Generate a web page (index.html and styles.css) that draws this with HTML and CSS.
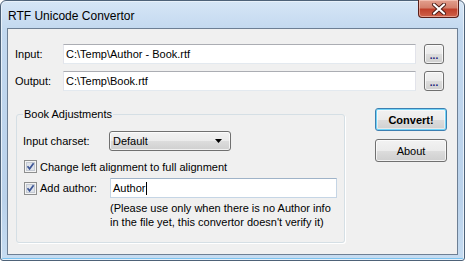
FILE: index.html
```html
<!DOCTYPE html>
<html lang="en">

<head>
    <meta charset="UTF-8">
    <title>RTF Unicode Convertor</title>
    <link rel="stylesheet" href="styles.css">
</head>

<body>
    <div class="window">
        <div class="titlebar">
            <span class="title">RTF Unicode Convertor</span>
            <div class="close">
                <svg width="16" height="12" viewBox="0 0 16 12">
                    <path d="M3 1.5 L13 10.5 M13 1.5 L3 10.5" stroke="#4a1a14" stroke-width="4" stroke-linecap="round" />
                    <path d="M3 1.5 L13 10.5 M13 1.5 L3 10.5" stroke="#fff" stroke-width="2.2" stroke-linecap="round" />
                </svg>
            </div>
        </div>
        <div class="client">
            <div class="file-row">
                <label class="file-label">Input:</label>
                <div class="textbox path">C:\Temp\Author - Book.rtf</div>
                <div class="btn browse">...</div>
            </div>
            <div class="file-row second">
                <label class="file-label">Output:</label>
                <div class="textbox path">C:\Temp\Book.rtf</div>
                <div class="btn browse">...</div>
            </div>
            <div class="lower">
                <fieldset class="group">
                    <legend>Book Adjustments</legend>
                    <div class="charset-row">
                        <span class="charset-label">Input charset:</span>
                        <div class="btn combo">
                            <span>Default</span>
                            <svg width="7" height="4" viewBox="0 0 7 4"><path d="M0 0 H7 L3.5 4 Z" fill="#000" /></svg>
                        </div>
                    </div>
                    <div class="check-row">
                        <svg class="check" width="13" height="13" viewBox="0 0 13 13">
                            <rect x="0.5" y="0.5" width="12" height="12" fill="#f4f4f4" stroke="#8e8f8f" />
                            <rect x="2.5" y="2.5" width="8" height="8" fill="#dfe3ea" stroke="#c4cad3" />
                            <path d="M3.5 6.2 L5.6 8.8 L9.6 3.2" fill="none" stroke="#3d5696" stroke-width="1.7" />
                        </svg>
                        <span>Change left alignment to full alignment</span>
                    </div>
                    <div class="author-row">
                        <div class="check-label">
                            <svg class="check" width="13" height="13" viewBox="0 0 13 13">
                                <rect x="0.5" y="0.5" width="12" height="12" fill="#f4f4f4" stroke="#8e8f8f" />
                                <rect x="2.5" y="2.5" width="8" height="8" fill="#dfe3ea" stroke="#c4cad3" />
                                <path d="M3.5 6.2 L5.6 8.8 L9.6 3.2" fill="none" stroke="#3d5696" stroke-width="1.7" />
                            </svg>
                            <span>Add author:</span>
                        </div>
                        <div class="textbox author">Author<span class="caret"></span></div>
                    </div>
                    <p class="note">(Please use only when there is no Author info<br>in the file yet, this convertor doesn't verify it)</p>
                </fieldset>
                <div class="actions">
                    <div class="btn action default">Convert!</div>
                    <div class="btn action">About</div>
                </div>
            </div>
        </div>
    </div>
</body>

</html>
```

FILE: styles.css
```css
body {
    margin: 0;
    padding: 0;
    font-family: "Liberation Sans", Arial, sans-serif;
    font-size: 11px;
    color: #000;
    background: #fff;
}

.window {
    box-sizing: border-box;
    width: 465px;
    height: 261px;
    display: flex;
    flex-direction: column;
    padding: 0 6px 5px 6px;
    border: 1px solid #4e6278;
    border-radius: 6px 6px 3px 3px;
    background: linear-gradient(to bottom, #d6e6f6 0, #c2d8ef 30px, #bad2eb 200px, #c6dcf1 100%);
    box-shadow: inset 0 0 0 1px #e8f1fa, inset 0 -2px 0 #7cc3ef;
}

.titlebar {
    height: 27px;
    display: flex;
    justify-content: space-between;
    align-items: flex-start;
}

.title {
    font-size: 12px;
    margin-top: 8px;
    margin-left: 1px;
}

.close {
    box-sizing: border-box;
    width: 41px;
    height: 18px;
    margin-top: -1px;
    margin-right: -1px;
    display: flex;
    align-items: center;
    justify-content: center;
    border: 1px solid #5a1e18;
    border-top: none;
    border-radius: 0 0 4px 4px;
    background: linear-gradient(to bottom, #e3a08f 0, #d4806c 45%, #c0402b 55%, #cf624a 100%);
    box-shadow: inset 0 0 0 1px rgba(255, 220, 210, 0.5);
}

.client {
    flex: 1;
    background: #f0f0f0;
    border: 1px solid #6d7f94;
    padding: 0 10px 0 7px;
}

.file-row {
    display: flex;
    align-items: center;
    margin-top: 15px;
}

.file-row.second {
    margin-top: 7px;
}

.file-label {
    width: 48px;
}

.textbox {
    box-sizing: border-box;
    height: 20px;
    background: #fff;
    border: 1px solid #e2e3ea;
    border-top-color: #abadb3;
    border-bottom-color: #e3e9ef;
    display: flex;
    align-items: center;
    flex: none;
}

.path {
    width: 353px;
    padding-left: 2px;
}

.btn {
    box-sizing: border-box;
    border: 1px solid #707070;
    border-radius: 3px;
    background: linear-gradient(to bottom, #f2f2f2 0, #ebebeb 50%, #dddddd 50%, #cfcfcf 100%);
    box-shadow: inset 0 0 0 1px rgba(255, 255, 255, 0.7);
}

.browse {
    width: 20px;
    height: 20px;
    margin-left: 8px;
    color: #1a1a7a;
    font-weight: bold;
    font-size: 10px;
    line-height: 22px;
    text-align: center;
}

.lower {
    display: flex;
    margin-top: 17px;
}

.group {
    box-sizing: border-box;
    flex: none;
    width: 329px;
    height: 135px;
    min-width: 0;
    margin: 0 0 0 1px;
    padding: 10px 6px 0 6px;
    border: 1px solid #d5dfe5;
    border-radius: 3px;
    box-shadow: 1px 1px 0 #fff;
}

.group legend {
    padding: 0 1px;
    line-height: 13px;
}

.charset-row {
    display: flex;
    align-items: center;
}

.charset-label {
    width: 86px;
}

.combo {
    width: 122px;
    height: 20px;
    display: flex;
    align-items: center;
    justify-content: space-between;
    padding: 0 8px 0 3px;
}

.check-row,
.check-label {
    display: flex;
    align-items: center;
}

.check-row {
    margin-top: 8px;
    height: 15px;
}

.check {
    margin-left: 1px;
    margin-right: 3px;
    flex: none;
}

.author-row {
    display: flex;
    align-items: center;
    margin-top: 4px;
}

.check-label {
    width: 87px;
}

.author {
    width: 227px;
    padding-left: 2px;
    border-color: #c5d5e5;
    border-top-color: #9fb3c8;
}

.caret {
    display: inline-block;
    width: 1px;
    height: 13px;
    margin-left: 1px;
    background: #000;
}

.note {
    margin: 3px 0 0 87px;
    line-height: 14px;
}

.actions {
    flex: none;
    display: flex;
    flex-direction: column;
    gap: 8px;
    margin-left: 30px;
}

.action {
    width: 72px;
    height: 23px;
    display: flex;
    align-items: center;
    justify-content: center;
}

.action.default {
    font-weight: bold;
    border-color: #3c7fb1;
    box-shadow: inset 0 0 0 1px #72d4f8, inset 0 0 0 2px rgba(255, 255, 255, 0.5);
}
```
